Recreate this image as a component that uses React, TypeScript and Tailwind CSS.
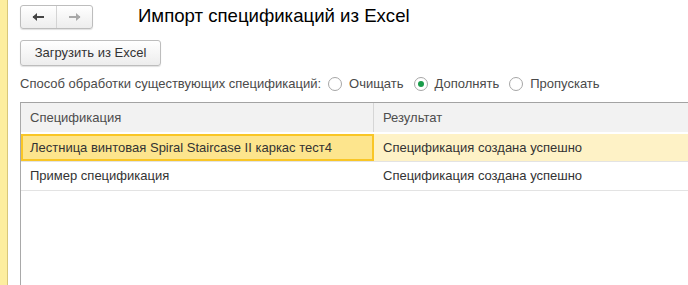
import React from "react";

const font = { fontFamily: '"Liberation Sans", Arial, sans-serif' };

function Radio({ label, checked }: { label: string; checked?: boolean }) {
  return (
    <label className="flex items-center gap-[7px]">
      <span className="w-[14px] h-[14px] rounded-full border border-[#a6a6a6] bg-white flex items-center justify-center">
        {checked && <span className="w-[6px] h-[6px] rounded-full bg-[#1a9c4a]" />}
      </span>
      <span>{label}</span>
    </label>
  );
}

export default function App() {
  return (
    <div className="w-[688px] h-[285px] bg-white flex overflow-hidden text-[13px] text-[#333]" style={font}>
      {/* left panel strip */}
      <div className="w-[8px] shrink-0 bg-[#fdee9f] border-r border-[#d8c77a]" />

      <div className="flex-1 flex flex-col pl-[12px] min-w-0">
        {/* header */}
        <div className="flex items-center h-[34px]">
          <div className="flex h-[24px] w-[73px] rounded-[3px] border border-[#bdbdbd] bg-gradient-to-b from-white to-[#ededed] shadow-[0_1px_1px_rgba(0,0,0,0.12)]">
            <div className="flex-1 flex items-center justify-center border-r border-[#d4d4d4]">
              <svg width="13" height="10" viewBox="0 0 13 10">
                <path d="M1 5h11" stroke="#444" strokeWidth="2" />
                <path d="M0.5 5L5 1v8z" fill="#444" />
              </svg>
            </div>
            <div className="flex-1 flex items-center justify-center">
              <svg width="13" height="10" viewBox="0 0 13 10">
                <path d="M1 5h11" stroke="#a8a8a8" strokeWidth="2" />
                <path d="M12.5 5L8 1v8z" fill="#a8a8a8" />
              </svg>
            </div>
          </div>
          <div className="ml-[45px] text-[18.6px] text-black leading-none -mt-[2px]">Импорт спецификаций из Excel</div>
        </div>

        {/* load button */}
        <div className="mt-[6px]">
          <button className="h-[26px] w-[141px] rounded-[3px] border border-[#bdbdbd] bg-gradient-to-b from-white to-[#ededed] shadow-[0_1px_1px_rgba(0,0,0,0.12)] text-[#333] text-[13px]">
            Загрузить из Excel
          </button>
        </div>

        {/* mode */}
        <div className="flex items-center gap-[10px] mt-[10px] h-[16px] text-[#4a4a4a]">
          <span className="mr-[-3px]">Способ обработки существующих спецификаций:</span>
          <Radio label="Очищать" />
          <Radio label="Дополнять" checked />
          <Radio label="Пропускать" />
        </div>

        {/* table */}
        <div className="mt-[10px] flex-1 border-l border-t border-l-[#a9a9a9] border-t-[#a3a3a3] mr-[-2px]">
          <div className="flex h-[31px] bg-[#f2f2f2] text-[#4d4d4d] border-b-2 border-white">
            <div className="w-[353px] border-r border-[#d6d6d6] px-[9px] flex items-center">Спецификация</div>
            <div className="flex-1 px-[9px] flex items-center">Результат</div>
          </div>
          <div className="flex h-[28px] bg-[#fef2c6] border-b border-[#e3e3e3]">
            <div className="w-[353px] border-2 border-[#f9c626] bg-[#fde58d] px-[7px] flex items-center">
              Лестница винтовая Spiral Staircase II каркас тест4
            </div>
            <div className="flex-1 px-[9px] flex items-center">Спецификация создана успешно</div>
          </div>
          <div className="flex h-[29px] border-b border-[#e3e3e3]">
            <div className="w-[353px] px-[9px] flex items-center">Пример спецификация</div>
            <div className="flex-1 px-[9px] flex items-center">Спецификация создана успешно</div>
          </div>
        </div>
      </div>
    </div>
  );
}
